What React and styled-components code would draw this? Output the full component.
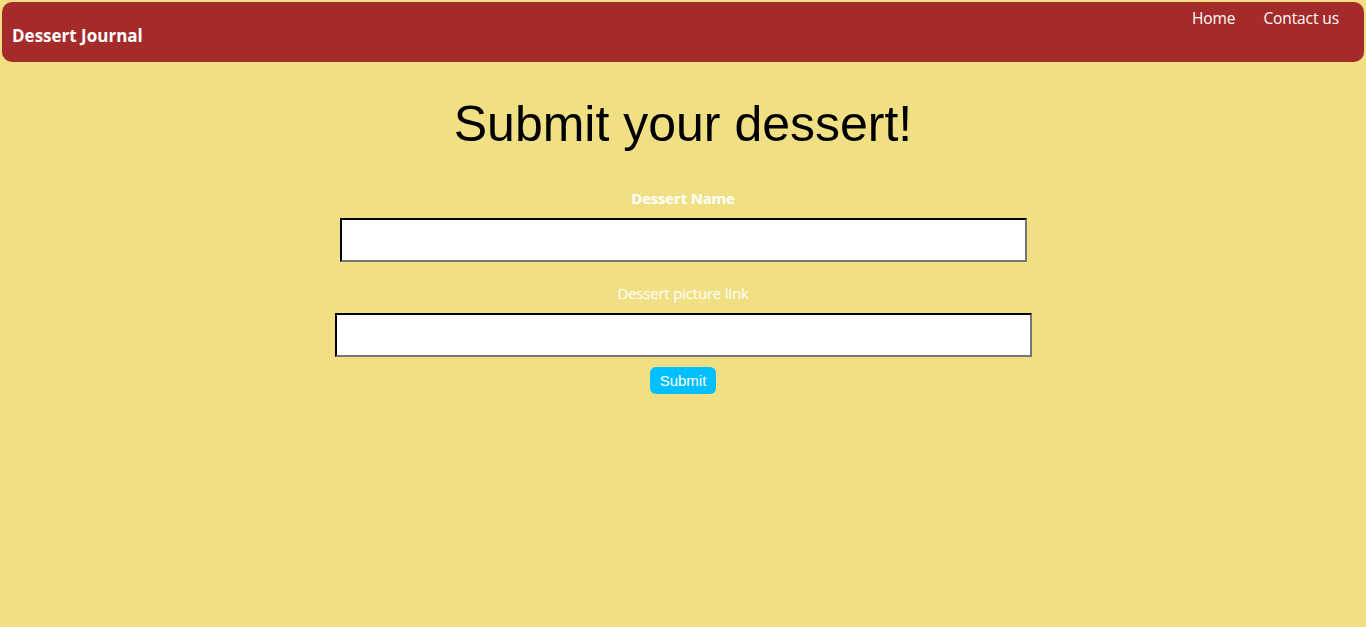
import React from 'react';
import styled, {createGlobalStyle} from 'styled-components';

const GlobalStyle = createGlobalStyle`
  body{
    margin: 0;
    background: #f1df84;
    font-family: "Open Sans", "Noto Sans", sans-serif;
  }
`

function App() {
  return (
    <>
      <GlobalStyle />
      <Nav>
        <Brand>Dessert Journal</Brand>
        <Links>
          <NavLink href="#">Home</NavLink>
          <NavLink href="#">Contact us</NavLink>
        </Links>
      </Nav>

      <Main>
        <Title>Submit your dessert!</Title>
        <Form onSubmit={e => e.preventDefault()}>
          <Label bold>Dessert Name</Label>
          <Input type="text" width={687} />
          <Label>Dessert picture link</Label>
          <Input type="text" width={697} />
          <Button type="submit">Submit</Button>
        </Form>
      </Main>
    </>
  );
}

const Nav = styled.nav`
  margin: 2px;
  height: 60px;
  background: #a52a2a;
  border-radius: 10px;
  display: flex;
  justify-content: space-between;
  align-items: flex-start;
  padding: 0 25px 0 10px;
`

const Brand = styled.div`
  align-self: center;
  margin-top: 7px;
  color: white;
  font-weight: 700;
  font-size: 17px;
`

const Links = styled.div`
  display: flex;
  gap: 28px;
  padding-top: 5px;
`

const NavLink = styled.a`
  color: white;
  text-decoration: none;
  font-size: 15.5px;
  letter-spacing: -0.1px;
`

const Main = styled.main`
  display: flex;
  flex-direction: column;
  align-items: center;
`

const Title = styled.h1`
  font-family: "Liberation Sans", Arial, sans-serif;
  font-weight: 400;
  font-size: 50px;
  margin: 31px 0 35px;
  color: black;
`

const Form = styled.form`
  display: flex;
  flex-direction: column;
  align-items: center;
`

const Label = styled.label`
  color: white;
  font-size: 15px;
  font-weight: ${p => (p.bold ? 700 : 400)};
  letter-spacing: -0.2px;
  margin-bottom: 10px;
`

const Input = styled.input`
  box-sizing: border-box;
  width: ${p => p.width}px;
  height: 44px;
  border: 2px inset #767676;
  border-top-color: #222;
  border-left-color: #222;
  background: white;
  margin-bottom: 21px;
`

const Button = styled.button`
  margin-top: -11px;
  background: #00bfff;
  color: white;
  border: none;
  border-radius: 6px;
  font-family: "Liberation Sans", Arial, sans-serif;
  font-size: 15px;
  padding: 5px 10px;
  cursor: pointer;
`

export default App;
